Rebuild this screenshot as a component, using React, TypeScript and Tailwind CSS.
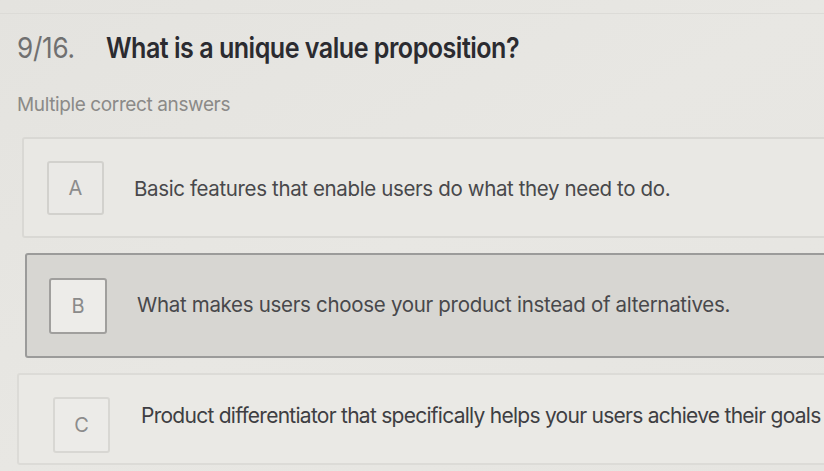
import React from "react";

const options = [
  { letter: "A", text: "Basic features that enable users do what they need to do.", selected: false },
  { letter: "B", text: "What makes users choose your product instead of alternatives.", selected: true },
  { letter: "C", text: "Product differentiator that specifically helps your users achieve their goals", selected: false },
];

export default function App() {
  return (
    <div
      className="w-[824px] h-[471px] overflow-hidden bg-gradient-to-br from-[#e4e3df] via-[#e8e7e3] to-[#e6e5e1]"
      style={{ fontFamily: "Inter, 'Noto Sans', sans-serif" }}
    >
      <div className="h-[14px] border-b border-[#dcdbd7]" />
      <div className="pl-[17px] pt-[16px] flex items-baseline gap-[28px]">
        <span className="inline-block origin-left scale-x-[0.9] text-[29px] leading-[36px] text-[#707070] tracking-[-0.01em] w-[61px]">
          9/16.
        </span>
        <span className="inline-block origin-left scale-x-[0.865] whitespace-nowrap text-[29px] leading-[36px] font-semibold text-[#2b2b30] tracking-[-0.02em]">
          What is a unique value proposition?
        </span>
      </div>
      <div className="pl-[17px] mt-[28px] text-[19px] leading-[22px] text-[#8b8a88] tracking-[-0.02em]">
        Multiple correct answers
      </div>
      <div className="mt-[21px] flex flex-col gap-[15px]">
        {options.map((o, i) => (
          <div
            key={o.letter}
            className={
              o.selected
                ? "ml-[25px] w-[830px] h-[105px] border-2 border-[#9b9b9a] rounded-[3px] bg-[#d7d6d2] flex items-center"
                : i === 0
                ? "ml-[22px] w-[830px] h-[101px] border-2 border-[#d9d8d4] rounded-[3px] bg-[#e9e8e4] flex items-center"
                : "ml-[17px] w-[830px] h-[92px] border-2 border-[#dcdbd7] rounded-[3px] bg-[#eae9e5] flex items-center"
            }
          >
            <div
              className={
                o.selected
                  ? "ml-[22px] w-[58px] h-[56px] shrink-0 border-2 border-[#a09f9d] rounded-[3px] bg-[#edece9] flex items-center justify-center text-[20px] text-[#8a8a8a]"
                  : i === 0
                  ? "ml-[23px] w-[57px] h-[54px] shrink-0 border-2 border-[#d2d1cd] rounded-[3px] bg-[#eae9e6] flex items-center justify-center text-[20px] text-[#8c8c8c]"
                  : "ml-[34px] mt-[12px] w-[57px] h-[56px] shrink-0 border-2 border-[#d8d7d3] rounded-[3px] bg-[#ecebe8] flex items-center justify-center text-[20px] text-[#8c8c8c]"
              }
            >
              {o.letter}
            </div>
            <div
              className={
                i === 2
                  ? "ml-[31px] -mt-[6px] whitespace-nowrap text-[21px] text-[#3e3e42] tracking-[-0.035em]"
                  : i === 0
                  ? "ml-[30px] whitespace-nowrap text-[20.5px] text-[#48484b] tracking-[-0.018em] mt-[4px]"
                  : "ml-[30px] whitespace-nowrap text-[20.5px] text-[#48484b] tracking-[-0.015em]"
              }
            >
              {o.text}
            </div>
          </div>
        ))}
      </div>
    </div>
  );
}
